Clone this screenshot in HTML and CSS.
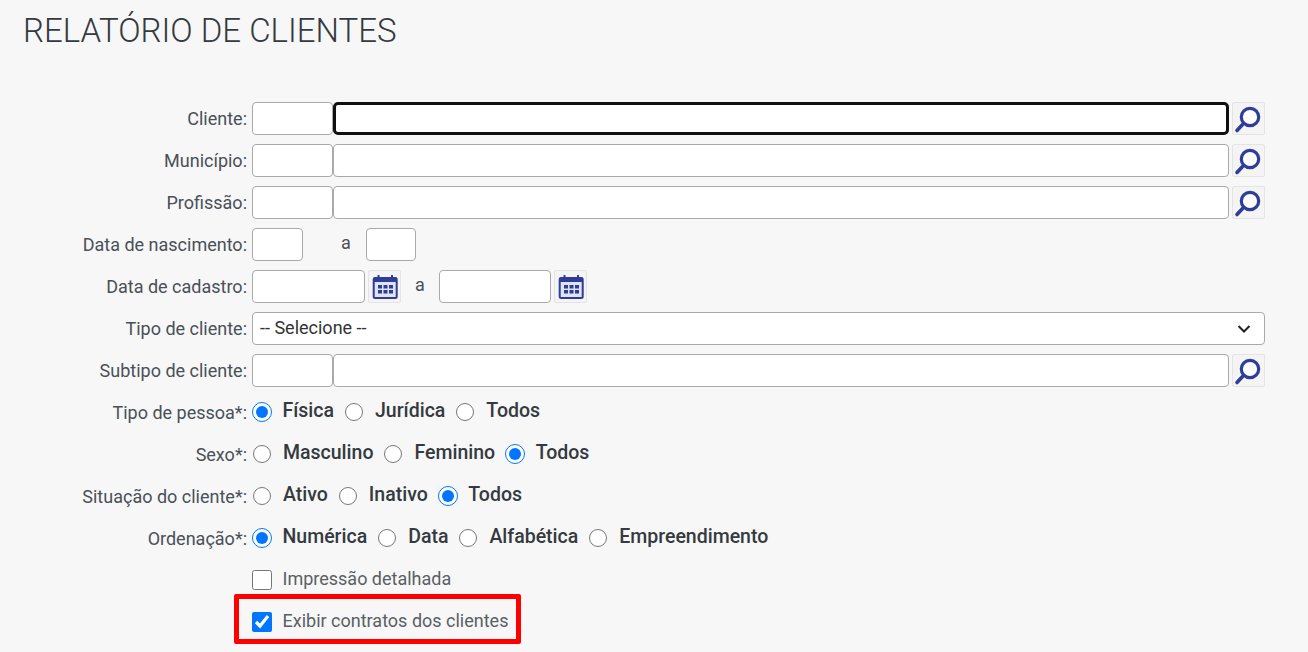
FILE: index.html
```html
<!DOCTYPE html>
<html lang="pt-BR">
<head>
<meta charset="utf-8">
<title>Relatório de clientes</title>
<link rel="stylesheet" href="styles.css">
</head>
<body>
<svg class="defs" width="0" height="0" aria-hidden="true">
  <symbol id="lupa" viewBox="1 1 31 31">
    <circle cx="18" cy="15" r="8.700" fill="#fff" stroke="#2e3d98" stroke-width="3.200"/>
    <path d="M11.500 21.500 5 28.500" stroke="#2e3d98" stroke-width="3.600" stroke-linecap="round" fill="none"/>
  </symbol>
  <symbol id="cal" viewBox="1 1 31 31">
    <rect x="5.700" y="8" width="23" height="20" rx="1.500" fill="#dfe3f2" stroke="#2e3d98" stroke-width="2"/>
    <rect x="5.700" y="7.500" width="23" height="4.500" fill="#2e3d98"/>
    <path d="M10.500 5v4M24 5v4" stroke="#2e3d98" stroke-width="2" fill="none"/>
    <path d="M10 15h4v3.500h-4zM15.500 15h4v3.500h-4zM21 15h4v3.500h-4zM10 20h4v3.500h-4zM15.500 20h4v3.500h-4zM21 20h4v3.500h-4z" fill="#2e3d98"/>
  </symbol>
</svg>
<main class="page">
  <h1 class="title">RELATÓRIO DE CLIENTES</h1>
  <form class="form">
    <label class="lbl">Cliente:</label>
    <div class="field">
      <input class="inp code" type="text">
      <input class="inp grow focused" type="text">
      <button class="icon-btn" type="button"><svg class="ico"><use href="#lupa"/></svg></button>
    </div>

    <label class="lbl">Município:</label>
    <div class="field">
      <input class="inp code" type="text">
      <input class="inp grow" type="text">
      <button class="icon-btn" type="button"><svg class="ico"><use href="#lupa"/></svg></button>
    </div>

    <label class="lbl">Profissão:</label>
    <div class="field">
      <input class="inp code" type="text">
      <input class="inp grow" type="text">
      <button class="icon-btn" type="button"><svg class="ico"><use href="#lupa"/></svg></button>
    </div>

    <label class="lbl">Data de nascimento:</label>
    <div class="field">
      <input class="inp year" type="text">
      <span class="sep sep-year">a</span>
      <input class="inp year year-end" type="text">
    </div>

    <label class="lbl">Data de cadastro:</label>
    <div class="field">
      <input class="inp date" type="text">
      <button class="icon-btn" type="button"><svg class="ico"><use href="#cal"/></svg></button>
      <span class="sep sep-date">a</span>
      <input class="inp date date-end" type="text">
      <button class="icon-btn" type="button"><svg class="ico"><use href="#cal"/></svg></button>
    </div>

    <label class="lbl">Tipo de cliente:</label>
    <div class="field">
      <div class="select-box">
        <span class="select-text">-- Selecione --</span>
        <svg class="chev" width="14" height="10" viewBox="0 0 14 10"><path d="M1.500 2 7 7.500 12.500 2" fill="none" stroke="#222" stroke-width="2"/></svg>
      </div>
    </div>

    <label class="lbl">Subtipo de cliente:</label>
    <div class="field">
      <input class="inp code" type="text">
      <input class="inp grow" type="text">
      <button class="icon-btn" type="button"><svg class="ico"><use href="#lupa"/></svg></button>
    </div>

    <label class="lbl">Tipo de pessoa*:</label>
    <div class="field">
      <input class="rad" type="radio" name="pessoa" checked><span class="opt">Física</span>
      <input class="rad" type="radio" name="pessoa"><span class="opt">Jurídica</span>
      <input class="rad" type="radio" name="pessoa"><span class="opt">Todos</span>
    </div>

    <label class="lbl">Sexo*:</label>
    <div class="field">
      <input class="rad" type="radio" name="sexo"><span class="opt">Masculino</span>
      <input class="rad" type="radio" name="sexo"><span class="opt">Feminino</span>
      <input class="rad" type="radio" name="sexo" checked><span class="opt">Todos</span>
    </div>

    <label class="lbl">Situação do cliente*:</label>
    <div class="field">
      <input class="rad" type="radio" name="sit"><span class="opt">Ativo</span>
      <input class="rad" type="radio" name="sit"><span class="opt">Inativo</span>
      <input class="rad" type="radio" name="sit" checked><span class="opt">Todos</span>
    </div>

    <label class="lbl">Ordenação*:</label>
    <div class="field">
      <input class="rad" type="radio" name="ord" checked><span class="opt">Numérica</span>
      <input class="rad" type="radio" name="ord"><span class="opt">Data</span>
      <input class="rad" type="radio" name="ord"><span class="opt">Alfabética</span>
      <input class="rad" type="radio" name="ord"><span class="opt">Empreendimento</span>
    </div>

    <div class="field">
      <input class="chk" type="checkbox"><span class="chk-text">Impressão detalhada</span>
    </div>

    <div class="field">
      <input class="chk" type="checkbox" checked><span class="chk-text">Exibir contratos dos clientes</span>
      <div class="red-box"></div>
    </div>
  </form>
</main>
</body>
</html>
```
FILE: styles.css
```css
* { box-sizing: border-box; }
html, body { margin: 0; height: 100%; }
body {
  background: #f7f7f7;
  font-family: Roboto, "Liberation Sans", sans-serif;
  color: #495057;
  overflow: hidden;
}
.defs { position: absolute; }
.page { padding: 11px 43px 0 23px; }
.title {
  margin: 0 0 51px;
  font-size: 33px;
  font-weight: 300;
  line-height: 40px;
  color: #343a40;
}
.form {
  display: grid;
  grid-template-columns: 225px 1fr;
  column-gap: 4px;
  row-gap: 9px;
}
.lbl {
  grid-column: 1;
  font-size: 18px;
  line-height: 33px;
  padding-right: 1px;
  text-align: right;
  white-space: nowrap;
}
.field {
  grid-column: 2;
  display: flex;
  align-items: center;
  height: 33px;
  position: relative;
}
.inp {
  height: 33px;
  margin: 0;
  padding: 0 8px;
  background: #fff;
  border: 1px solid #a9a9a9;
  border-radius: 4px;
  outline: none;
}
.code { width: 81px; }
.year { width: 51px; }
.year-end { width: 50px; }
.date { width: 113px; }
.date-end { width: 112px; }
.grow { flex: 1; min-width: 0; }
.focused { border: 3px solid #101010; border-radius: 5px; }
.icon-btn {
  width: 33px;
  height: 33px;
  margin: 0 0 0 3px;
  padding: 0;
  flex: none;
  display: block;
  background: #f4f4f4;
  border: 1px solid #e4e4e4;
  border-radius: 2px;
}
.ico { display: block; width: 31px; height: 31px; }
.sep { font-size: 18px; line-height: 33px; }
.sep-year { width: 63px; padding-left: 38px; position: relative; top: -2px; }
.sep-date { width: 38px; padding-left: 14px; position: relative; top: -2px; }
.select-box {
  flex: 1;
  height: 33px;
  display: flex;
  align-items: center;
  justify-content: space-between;
  padding: 0 13px 0 7px;
  background: #fff;
  border: 1px solid #a9a9a9;
  border-radius: 4px;
  font-size: 18px;
  color: #333;
}
.select-text { position: relative; top: -1px; }
.chev { display: block; }
.rad {
  width: 18px;
  height: 18px;
  margin: 0 12px 2px 1px;
  flex: none;
}
.rad:checked {
  width: 20px;
  height: 20px;
  margin: 0 10.500px 2px 0;
}
.opt {
  font-size: 19.500px;
  font-weight: 500;
  color: #343a40;
  margin-right: 10px;
  position: relative;
  top: -2px;
}
.chk {
  width: 20px;
  height: 20px;
  margin: 0 10.500px 2px 0;
  flex: none;
}
.chk-text { font-size: 18px; color: #5a5f64; position: relative; top: -2px; }
.red-box {
  position: absolute;
  left: -18px;
  top: -12px;
  width: 287px;
  height: 50px;
  border: 5px solid #f00;
  border-radius: 2px;
  pointer-events: none;
}
```
